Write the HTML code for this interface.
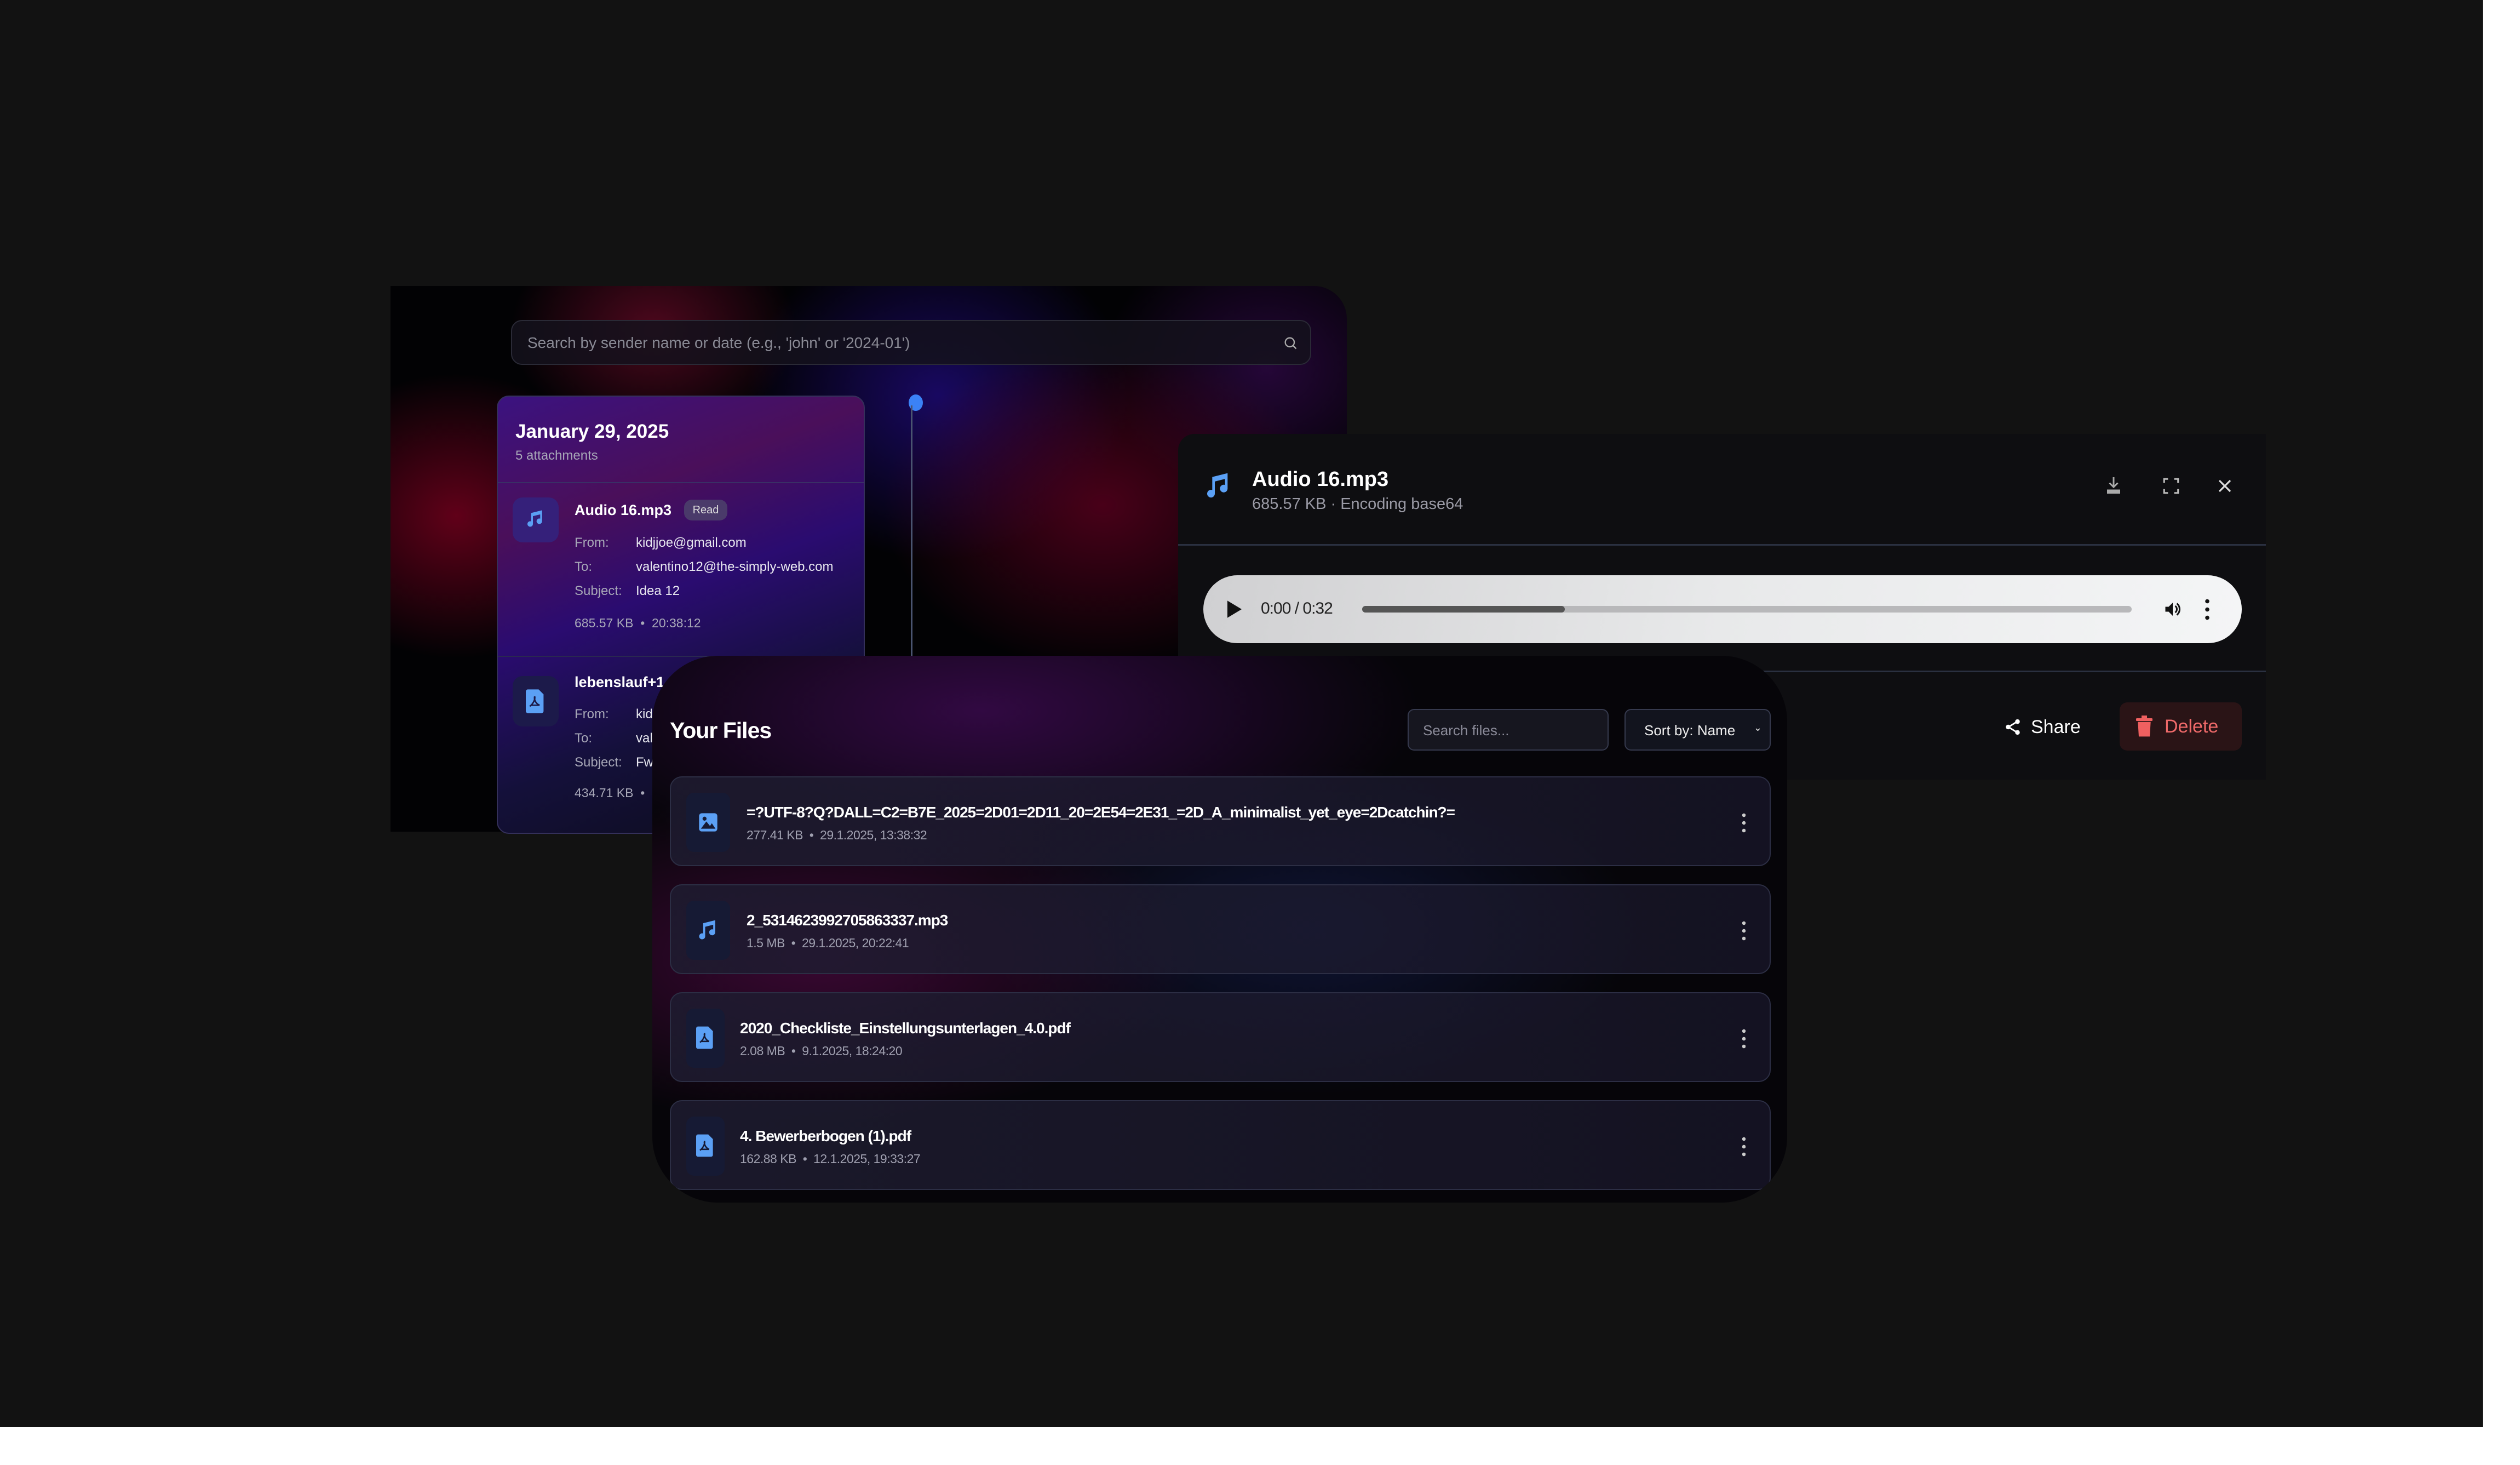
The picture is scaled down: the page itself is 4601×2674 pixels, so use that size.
<!DOCTYPE html>
<html><head><meta charset="utf-8"><style>
*{margin:0;padding:0;box-sizing:border-box}
body{width:4601px;height:2674px;background:#fff;font-family:"Liberation Sans",sans-serif;position:relative;overflow:hidden}
.abs{position:absolute}
#bg{left:0;top:0;width:4533px;height:2605px;background:#121212}
#email{left:713px;top:522px;width:1746px;height:996px;background:
radial-gradient(ellipse 260px 200px at 480px 80px,rgba(110,10,40,.7),transparent),
radial-gradient(ellipse 300px 260px at 120px 420px,rgba(120,0,30,.8),transparent),
radial-gradient(ellipse 400px 300px at 1300px 400px,rgba(90,0,30,.8),transparent),
radial-gradient(ellipse 350px 300px at 1000px 200px,rgba(30,10,120,.8),transparent),
radial-gradient(ellipse 300px 250px at 1600px 150px,rgba(60,10,90,.6),transparent),
#020204;border-top-right-radius:60px;overflow:hidden}
#search{left:933px;top:584px;width:1461px;height:82px;border:2px solid #2a2a36;border-radius:20px;background:rgba(20,18,28,.85);color:#8a8a95;font-size:28px;padding:24px 28px}
#card{left:907px;top:722px;width:672px;height:800px;border:2px solid #34305a;border-radius:22px;background:linear-gradient(160deg,#3b1280 0%,#4a0f5a 25%,#2a0c70 45%,#14103a 70%,#0c0c18 100%);overflow:hidden}
.w{color:#fff}.g{color:#a8a8b8}
.ib{background:#1c1a4a;border-radius:18px}
#audio{left:2151px;top:792px;width:1986px;height:631px;background:#0e0e11;border-radius:30px 0 0 0}
#files{left:1191px;top:1197px;width:2072px;height:998px;border-radius:120px;background:
radial-gradient(ellipse 800px 300px at 600px 100px,rgba(60,10,80,.8),transparent),
radial-gradient(ellipse 700px 300px at 300px 550px,rgba(70,8,60,.8),transparent),
radial-gradient(ellipse 600px 300px at 1200px 500px,rgba(20,30,80,.6),transparent),
#060509;overflow:hidden}
.row{left:32px;width:2010px;height:164px;border:2px solid #2c2e44;border-radius:22px;background:linear-gradient(90deg,rgba(30,28,48,.85),rgba(26,24,44,.7))}
.row .ic{position:absolute;left:28px;top:28px;width:80px;height:108px;background:#161a34;border-radius:14px}
.row .nm{position:absolute;left:138px;top:48px;font-size:28px;color:#fff;font-weight:bold;letter-spacing:-1px}
.row .mt{position:absolute;left:138px;top:92px;font-size:23px;color:#a0a0b0;letter-spacing:-.5px}
.dots{position:absolute;right:44px;top:62px;width:6px;height:40px;background:radial-gradient(circle,#ccc 3px,transparent 3.5px) 0 0/6px 14px repeat-y}
</style></head><body>
<div id="bg" class="abs"></div>
<div id="email" class="abs"></div>
<div id="search" class="abs">Search by sender name or date (e.g., 'john' or '2024-01')
<svg class="abs" style="right:22px;top:26px" width="28" height="28" viewBox="0 0 24 24" fill="none" stroke="#aaa" stroke-width="2"><circle cx="11" cy="11" r="7"/><path d="M16 16l5 5"/></svg></div>
<div class="abs" style="left:1659px;top:720px;width:26px;height:30px;border-radius:50%;background:#3b82f6"></div>
<div class="abs" style="left:1663px;top:740px;width:3px;height:460px;background:#4a5470"></div>
<div id="card" class="abs">
 <div class="abs w" style="left:32px;top:44px;font-size:35px;font-weight:bold">January 29, 2025</div>
 <div class="abs g" style="left:32px;top:94px;font-size:24px">5 attachments</div>
 <div class="abs" style="left:0;top:156px;width:100%;height:2px;background:#3a2f66"></div>
 <div class="abs ib" style="left:27px;top:184px;width:84px;height:82px;background:#35207a"><svg class="abs" style="left:22px;top:20px" width="40" height="40" viewBox="0 0 24 24"><path fill="#5ba0f5" d="M9 17a3 3 0 1 1-2-2.8V5l12-3v12a3 3 0 1 1-2-2.8V6.5l-8 2z"/></svg></div>
 <div class="abs w" style="left:140px;top:192px;font-size:27px;font-weight:bold">Audio 16.mp3</div>
 <div class="abs" style="left:340px;top:188px;width:79px;height:38px;border-radius:14px;background:#4a3a6a;color:#ddd;font-size:20px;text-align:center;line-height:38px">Read</div>
 <div class="abs g" style="left:140px;top:245px;font-size:24px;line-height:44px">From:<br>To:<br>Subject:</div>
 <div class="abs" style="left:252px;top:245px;font-size:24px;line-height:44px;color:#e8e8f0">kidjjoe@gmail.com<br>valentino12@the-simply-web.com<br>Idea 12</div>
 <div class="abs g" style="left:140px;top:400px;font-size:23px">685.57 KB &nbsp;•&nbsp; 20:38:12</div>
 <div class="abs" style="left:0;top:473px;width:100%;height:2px;background:#2a2850"></div>
 <div class="abs ib" style="left:27px;top:510px;width:84px;height:92px"><svg class="abs" style="left:24px;top:24px" width="36" height="44" viewBox="0 0 20 24"><path fill="#5ba0f5" d="M2 0h11l5 5v17a2 2 0 0 1-2 2H2a2 2 0 0 1-2-2V2a2 2 0 0 1 2-2z"/><path fill="none" stroke="#1c1a4a" stroke-width="1.5" d="M9 7c-1 4 2 8 5 9M9 7c1 4-3 9-5 10M5 16h9"/></svg></div>
 <div class="abs w" style="left:140px;top:506px;font-size:27px;font-weight:bold">lebenslauf+1</div>
 <div class="abs g" style="left:140px;top:558px;font-size:24px;line-height:44px">From:<br>To:<br>Subject:</div>
 <div class="abs" style="left:252px;top:558px;font-size:24px;line-height:44px;color:#e8e8f0">kid<br>val<br>Fw</div>
 <div class="abs g" style="left:140px;top:710px;font-size:23px">434.71 KB &nbsp;•</div>
</div>
<div id="audio" class="abs">
 <svg class="abs" style="left:46px;top:66px" width="56" height="58" viewBox="0 0 24 24"><path fill="#5ba0f5" d="M9 18a3 3 0 1 1-2-2.8V5l12-3v12a3 3 0 1 1-2-2.8V6.5l-8 2z"/></svg>
 <div class="abs w" style="left:135px;top:62px;font-size:38px;font-weight:bold">Audio 16.mp3</div>
 <div class="abs" style="left:135px;top:112px;font-size:29px;color:#9a9aa5">685.57 KB · Encoding base64</div>
 <svg class="abs" style="left:1690px;top:74px" width="36" height="40" viewBox="0 0 24 24" fill="none" stroke="#aaa" stroke-width="2"><path d="M12 2v12M7 9l5 5 5-5"/><rect x="4" y="17" width="16" height="5" fill="#aaa" stroke="none"/></svg>
 <svg class="abs" style="left:1796px;top:78px" width="34" height="34" viewBox="0 0 24 24" fill="none" stroke="#bbb" stroke-width="2.2"><path d="M3 8V3h5M16 3h5v5M21 16v5h-5M8 21H3v-5"/></svg>
 <svg class="abs" style="left:1896px;top:80px" width="30" height="30" viewBox="0 0 24 24" stroke="#ddd" stroke-width="2.6"><path d="M4 4l16 16M20 4L4 20"/></svg>
 <div class="abs" style="left:0;top:201px;width:100%;height:3px;background:#2a3040"></div>
 <div class="abs" style="left:46px;top:258px;width:1896px;height:124px;border-radius:62px;background:linear-gradient(100deg,#d0d0d2,#e8e9ea 50%,#f4f5f6)">
  <svg class="abs" style="left:44px;top:46px" width="26" height="32" viewBox="0 0 10 12"><path d="M0 0l10 6-10 6z" fill="#111"/></svg>
  <div class="abs" style="left:105px;top:44px;font-size:30px;color:#222;letter-spacing:-1px">0:00 / 0:32</div>
  <div class="abs" style="left:290px;top:56px;width:1405px;height:12px;border-radius:6px;background:#b8b8ba"><div style="width:370px;height:12px;border-radius:6px;background:#555"></div></div>
  <svg class="abs" style="left:1752px;top:44px" width="36" height="36" viewBox="0 0 24 24"><path d="M3 9h4l5-5v16l-5-5H3z" fill="#111"/><path d="M15 8a5 5 0 0 1 0 8M17 5a9 9 0 0 1 0 14" stroke="#111" stroke-width="2" fill="none"/></svg>
  <div class="abs" style="left:1829px;top:40px;width:8px;height:44px;background:radial-gradient(circle,#111 3.5px,transparent 4px) 0 0/8px 15px repeat-y"></div>
 </div>
 <div class="abs" style="left:0;top:432px;width:100%;height:3px;background:#2a3040"></div>
 <svg class="abs" style="left:1507px;top:517px" width="34" height="36" viewBox="0 0 24 24" fill="#fff"><circle cx="18" cy="5" r="3"/><circle cx="6" cy="12" r="3"/><circle cx="18" cy="19" r="3"/><path d="M8 11l8-5M8 13l8 5" stroke="#fff" stroke-width="2"/></svg>
 <div class="abs w" style="left:1557px;top:516px;font-size:34px">Share</div>
 <div class="abs" style="left:1719px;top:490px;width:223px;height:88px;border-radius:14px;background:#2a1416">
  <svg class="abs" style="left:30px;top:24px" width="30" height="40" viewBox="0 0 18 24" fill="#f06060"><rect x="0" y="3" width="18" height="3" rx="1"/><rect x="6" y="0" width="6" height="4"/><path d="M2 7h14l-1 16H3z"/></svg>
  <div class="abs" style="left:82px;top:25px;font-size:34px;color:#f06a6a">Delete</div>
 </div>
</div>
<div id="files" class="abs">
 <div class="abs w" style="left:32px;top:113px;font-size:41px;font-weight:bold;letter-spacing:-1px">Your Files</div>
 <div class="abs" style="left:1379px;top:97px;width:367px;height:76px;border:2px solid #363a4e;border-radius:12px;background:#16161f;color:#8a8a98;font-size:26px;padding:22px 26px">Search files...</div>
 <div class="abs" style="left:1775px;top:97px;width:267px;height:76px;border:2px solid #363a4e;border-radius:12px;background:#12141e;color:#eee;font-size:26px;padding:22px 34px">Sort by: Name<span style="position:absolute;right:14px;font-size:18px">⌄</span></div>
 <div class="abs row" style="top:220px"><div class="ic"><svg class="abs" style="left:20px;top:32px" width="40" height="44" viewBox="0 0 24 24"><rect x="2" y="2" width="20" height="20" rx="3" fill="#5ba0f5"/><circle cx="8" cy="8" r="2.2" fill="#161a34"/><path d="M4 19l6-8 4 5 2-3 4 6z" fill="#161a34"/></svg></div><div class="nm" style="left:138px">=?UTF-8?Q?DALL=C2=B7E_2025=2D01=2D11_20=2E54=2E31_=2D_A_minimalist_yet_eye=2Dcatchin?=</div><div class="mt">277.41 KB &nbsp;•&nbsp; 29.1.2025, 13:38:32</div><div class="dots"></div></div>
 <div class="abs row" style="top:417px"><div class="ic"><svg class="abs" style="left:18px;top:30px" width="44" height="48" viewBox="0 0 24 24"><path fill="#5ba0f5" d="M9 18a3 3 0 1 1-2-2.8V5l12-3v12a3 3 0 1 1-2-2.8V6.5l-8 2z"/></svg></div><div class="nm">2_5314623992705863337.mp3</div><div class="mt">1.5 MB &nbsp;•&nbsp; 29.1.2025, 20:22:41</div><div class="dots"></div></div>
 <div class="abs row" style="top:614px"><div class="ic" style="width:70px"><svg class="abs" style="left:18px;top:30px" width="34" height="46" viewBox="0 0 20 24"><path fill="#5ba0f5" d="M2 0h11l5 5v17a2 2 0 0 1-2 2H2a2 2 0 0 1-2-2V2a2 2 0 0 1 2-2z"/><path fill="none" stroke="#161a34" stroke-width="1.5" d="M9 7c-1 4 2 8 5 9M9 7c1 4-3 9-5 10M5 16h9"/></svg></div><div class="nm" style="left:126px">2020_Checkliste_Einstellungsunterlagen_4.0.pdf</div><div class="mt" style="left:126px">2.08 MB &nbsp;•&nbsp; 9.1.2025, 18:24:20</div><div class="dots"></div></div>
 <div class="abs row" style="top:811px"><div class="ic" style="width:70px"><svg class="abs" style="left:18px;top:30px" width="34" height="46" viewBox="0 0 20 24"><path fill="#5ba0f5" d="M2 0h11l5 5v17a2 2 0 0 1-2 2H2a2 2 0 0 1-2-2V2a2 2 0 0 1 2-2z"/><path fill="none" stroke="#161a34" stroke-width="1.5" d="M9 7c-1 4 2 8 5 9M9 7c1 4-3 9-5 10M5 16h9"/></svg></div><div class="nm" style="left:126px">4. Bewerberbogen (1).pdf</div><div class="mt" style="left:126px">162.88 KB &nbsp;•&nbsp; 12.1.2025, 19:33:27</div><div class="dots"></div></div>
</div>
</body></html>
